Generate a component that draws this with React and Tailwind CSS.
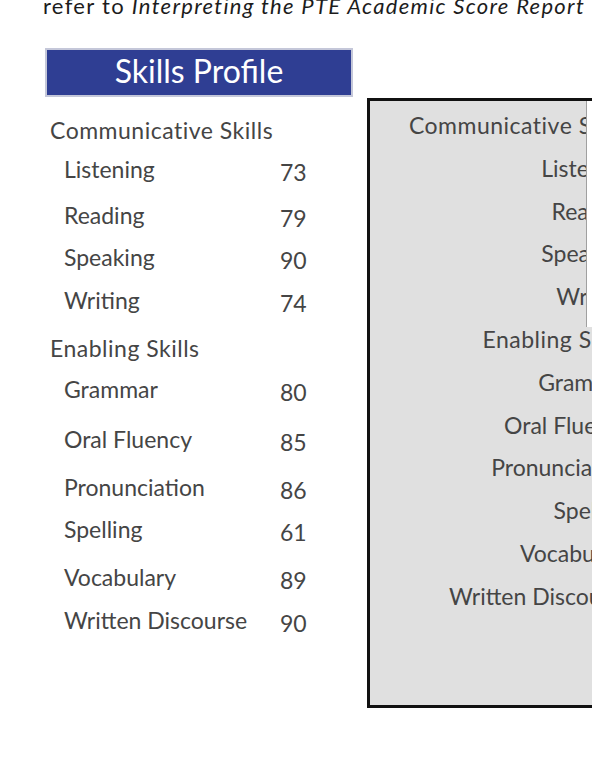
import React from 'react';

const leftRows = [
  { label: 'Communicative Skills', h: 'h-[39px]', head: true },
  { label: 'Listening', score: 73, h: 'h-[46px]' },
  { label: 'Reading', score: 79, h: 'h-[42px]' },
  { label: 'Speaking', score: 90, h: 'h-[43px]' },
  { label: 'Writing', score: 74, h: 'h-[48px]' },
  { label: 'Enabling Skills', h: 'h-[41px]', head: true },
  { label: 'Grammar', score: 80, h: 'h-[50px]' },
  { label: 'Oral Fluency', score: 85, h: 'h-[48px]' },
  { label: 'Pronunciation', score: 86, h: 'h-[42px]' },
  { label: 'Spelling', score: 61, h: 'h-[48px]' },
  { label: 'Vocabulary', score: 89, h: 'h-[43px]' },
  { label: 'Written Discourse', score: 90, h: 'h-[43px]' },
];

const SkillsList = () => (
  <div className="mt-[22px] text-[23px] leading-[23px]">
    {leftRows.map((row) => (
      <div key={row.label} className={`flex items-start ${row.h}`}>
        <span className={row.head ? 'pl-[5px] w-[235px] whitespace-nowrap tracking-[0.5px]' : 'pl-[19px] w-[235px]'}>
          {row.label}
        </span>
        {row.score && <span className="mt-[3px]">{row.score}</span>}
      </div>
    ))}
  </div>
);

const App = () => {
  return (
    <div className="relative w-[592px] h-[768px] overflow-hidden bg-white font-['Lato',sans-serif] text-[#454545]">
      <p className="-mt-[5px] pl-[43px] text-[22px] leading-none tracking-[1.3px] text-[#1c1c1c] whitespace-nowrap">
        refer to <i>Interpreting the PTE Academic Score Report</i>
      </p>

      <div className="flex pl-[45px] mt-[31px]">
        <div className="w-[308px] shrink-0">
          <div className="h-[49px] pb-[3px] border-2 border-[#c4c7d9] bg-[#2f3e93] flex items-center justify-center">
            <span className="text-[32px] leading-none text-white">Skills Profile</span>
          </div>
          <SkillsList />
        </div>

        <div className="relative ml-[14px] mt-[50px] w-[300px] h-[610px] shrink-0 border-[3px] border-[#111] bg-[#e0e0e0]">
          <div className="w-[262px] pt-[3px] text-right text-[23px] leading-[42.8px] whitespace-nowrap">
            {leftRows.map((row) => (
              <div key={row.label} className={row.head ? 'tracking-[0.5px]' : ''}>{row.label}</div>
            ))}
          </div>
          <div className="absolute left-[216px] top-0 w-[100px] h-[226px] border-l border-[#a0a0a0] bg-white" />
        </div>
      </div>
    </div>
  );
};

export default App;
